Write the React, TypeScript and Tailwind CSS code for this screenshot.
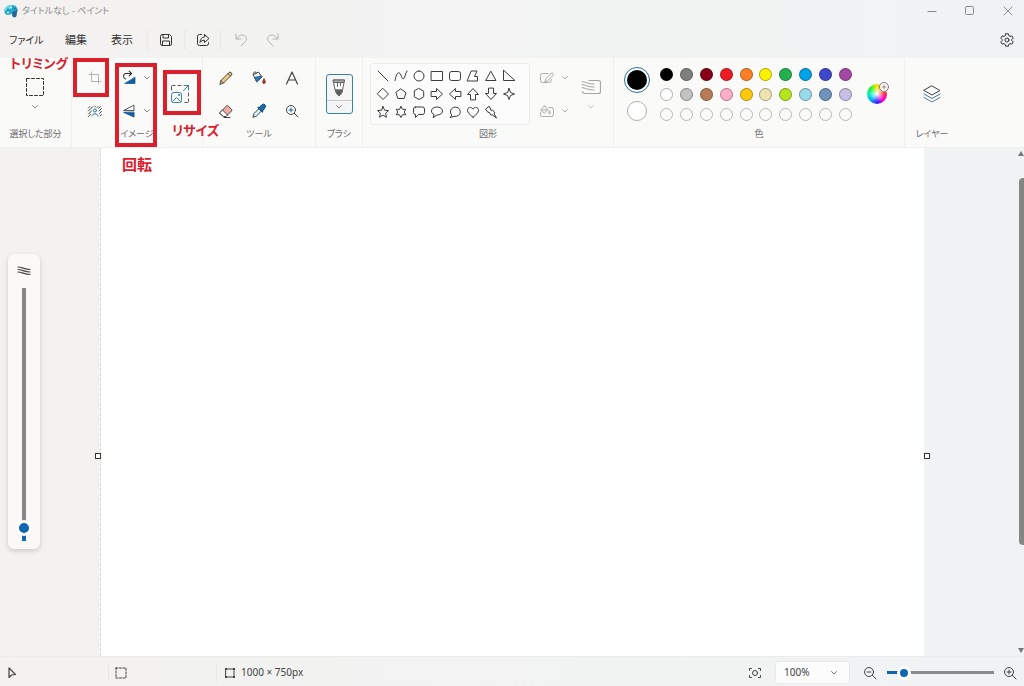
import { useState, type ReactNode } from "react";
import clsx from "clsx";

interface IconProps {
  children: ReactNode;
  box?: number;
  className?: string;
}

function Icon({ children, box = 16, className = "w-4 h-4" }: IconProps) {
  return (
    <svg
      viewBox={`0 0 ${box} ${box}`}
      fill="none"
      stroke="currentColor"
      strokeLinecap="round"
      strokeLinejoin="round"
      className={clsx("shrink-0", className)}
      aria-hidden="true"
    >
      {children}
    </svg>
  );
}

function Chevron({ className = "text-[#8a8a8a]" }: { className?: string }) {
  return (
    <Icon box={8} className={clsx("w-2 h-2", className)}>
      <path d="M1.5 2.5 4 5 6.5 2.5" />
    </Icon>
  );
}

function IconButton({ label, children, className }: { label: string; children: ReactNode; className?: string }) {
  return (
    <button type="button" aria-label={label} className={clsx("flex items-center justify-center", className)}>
      {children}
    </button>
  );
}

function Group({ title, className, children }: { title: string; className?: string; children: ReactNode }) {
  return (
    <section aria-label={title} className={clsx("flex flex-col shrink-0 border-r border-[#f0f0ef] pt-[3px]", className)}>
      <div className="flex flex-1 items-center">{children}</div>
      <div className="mb-1.5 text-center text-[9px] leading-[14px] text-[#6a6a6a] whitespace-nowrap">{title}</div>
    </section>
  );
}

const shapes: { name: string; d: string }[] = [
  { name: "直線", d: "M2 2 12 12" },
  { name: "曲線", d: "M1 11.5C2 6 4 2 6 4.5S8 12 10 9 11.5 3.5 13 2" },
  { name: "楕円", d: "M7 2a5 5 0 1 0 0 10A5 5 0 1 0 7 2Z" },
  { name: "四角形", d: "M1.5 2.5h11v9h-11Z" },
  { name: "角丸四角形", d: "M3.5 2.5h7a2 2 0 0 1 2 2v5a2 2 0 0 1-2 2h-7a2 2 0 0 1-2-2v-5a2 2 0 0 1 2-2Z" },
  { name: "多角形", d: "M5.5 2H11L8.5 7.5h3V12H1.5Z" },
  { name: "三角形", d: "M7 2.5 12 11.5H2Z" },
  { name: "直角三角形", d: "M1.5 1.5v10h11Z" },
  { name: "ひし形", d: "M7 1.5 12.5 7 7 12.5 1.5 7Z" },
  { name: "五角形", d: "M7 2 12 5.7 10.2 11.5H3.8L2 5.7Z" },
  { name: "六角形", d: "M7 1.5 11.7 4.2v5.6L7 12.5 2.3 9.8V4.2Z" },
  { name: "右矢印", d: "M1.5 4.5h5v-3L12.5 7l-6 5.5v-3h-5Z" },
  { name: "左矢印", d: "M12.5 4.5h-5v-3L1.5 7l6 5.5v-3h5Z" },
  { name: "上矢印", d: "M4.5 12.5v-5h-3L7 1.5l5.5 6h-3v5Z" },
  { name: "下矢印", d: "M4.5 1.5v5h-3L7 12.5l5.5-6h-3v-5Z" },
  { name: "四角星", d: "M7 1.5 8.5 5.5 12.5 7 8.5 8.5 7 12.5 5.5 8.5 1.5 7 5.5 5.5Z" },
  { name: "五角星", d: "M7 1.5 8.6 5.2 12.5 5.6 9.6 8.2 10.5 12.2 7 10.1 3.5 12.2 4.4 8.2 1.5 5.6 5.4 5.2Z" },
  { name: "六角星", d: "M7 1.5 8.6 4.3H11.8L10.2 7 11.8 9.7H8.6L7 12.5 5.4 9.7H2.2L3.8 7 2.2 4.3H5.4Z" },
  { name: "角丸吹き出し", d: "M3.5 2h7a2 2 0 0 1 2 2v3.5a2 2 0 0 1-2 2H6.5L3.5 12.5V9.5a2 2 0 0 1-2-2V4a2 2 0 0 1 2-2Z" },
  { name: "楕円吹き出し", d: "M3.8 9.5C2.3 8.7 1.5 7.5 1.5 6 1.5 3.5 4 2 7 2s5.5 1.5 5.5 4S10 10 7 10L3.5 12.5Z" },
  { name: "雲吹き出し", d: "M3.5 9.8a5 4.7 0 1 1 2.5 1.5L2.5 12.5Z" },
  { name: "ハート", d: "M7 12.2C4 9.8 1.5 7.8 1.5 5.2 1.5 2.3 5.2 1.2 7 4.2 8.8 1.2 12.5 2.3 12.5 5.2 12.5 7.8 10 9.8 7 12.2Z" },
  { name: "稲妻", d: "M5 1.5 1.5 4 4 7.5l1-.5 2 3.2 1-.5 4.5 3.3L10 8.5l1-.6L8.5 5l-1 .4Z" },
];

const palette = [
  "#000000", "#7f7f7f", "#880015", "#ed1c24", "#ff7f27", "#fff200", "#22b14c", "#00a2e8", "#3f48cc", "#a349a4",
  "#ffffff", "#c3c3c3", "#b97a57", "#ffaec9", "#ffc90e", "#efe4b0", "#b5e61d", "#99d9ea", "#7092be", "#c8bfe7",
];

function TitleBar() {
  return (
    <header className="flex h-[22px] shrink-0 items-center pl-[3px] text-[#8a8a8a]">
      <svg viewBox="0 0 16 16" className="h-4 w-4" aria-hidden="true">
        <path d="M1.5 9C1 5 4 2 8.5 2c4 0 6 2.200 6 5.500L13 9v4c-1 1.500-3 1.500-3.500 0l-.5-2.500C5.500 13 2 12 1.500 9Z" fill="#25a9c9" />
        <path d="M9 9.500 14.500 6.500 13.500 13c-1 2-3.500 1.500-4 0Z" fill="#2a6591" />
        <path d="M1.500 8C2 4 5 1.500 9 2L7 6Z" fill="#65dbe0" />
        <circle cx="8" cy="4.500" r="1" fill="#d8f6f8" />
        <circle cx="5" cy="6.500" r="1" fill="#1a7fb5" />
        <circle cx="11.500" cy="5.500" r="1" fill="#1f6fa8" />
        <circle cx="5" cy="9.500" r="1" fill="#bdf5ef" />
      </svg>
      <h1 className="ml-[3px] text-[9px] leading-4">タイトルなし - ペイント</h1>
      <div className="ml-auto flex items-center gap-[22px] pr-2">
        <IconButton label="最小化">
          <Icon><path d="M4 8.500h8" /></Icon>
        </IconButton>
        <IconButton label="最大化">
          <Icon><rect x="3.500" y="3.500" width="8" height="8" rx="1" /></Icon>
        </IconButton>
        <IconButton label="閉じる">
          <Icon><path d="m4 4 8 8m0-8-8 8" /></Icon>
        </IconButton>
      </div>
    </header>
  );
}

function MenuBar() {
  return (
    <nav className="flex h-9 shrink-0 items-center px-[9px] text-[11px] text-[#333]">
      <button type="button" className="w-14 text-left text-[10px] whitespace-nowrap">ファイル</button>
      <button type="button" className="w-[46px] text-left">編集</button>
      <button type="button" className="w-9 text-left">表示</button>
      <div className="flex items-center">
        <IconButton label="保存" className="h-5 w-[37px] border-l border-[#e9e8e7]">
          <Icon>
            <path d="M2.500 4A1.500 1.500 0 0 1 4 2.500h7.500l2 2V12a1.500 1.500 0 0 1-1.500 1.500H4A1.500 1.500 0 0 1 2.500 12Z" />
            <path d="M5 2.500V6h5.500V2.500M4.500 13.500V9h7v4.500" />
          </Icon>
        </IconButton>
        <IconButton label="共有" className="h-5 w-[37px] border-x border-[#e9e8e7]">
          <Icon>
            <path d="M6.500 2.500h-2a2 2 0 0 0-2 2v7a2 2 0 0 0 2 2h7a2 2 0 0 0 2-2V10.500" />
            <path d="M9.500 2.500 14 6.500 9.500 10.500V8.200C7.500 8.200 6 9 5 10.500 5.200 7 7 5 9.500 4.800Z" />
          </Icon>
        </IconButton>
      </div>
      <div className="ml-3 flex gap-4 text-[#b3b3b3]">
        <IconButton label="元に戻す">
          <Icon><path d="M3 2v5h5M3.300 6.800C6 3.500 9 1.800 11.800 3.800c2.300 1.800 1.900 4.300.3 6L8 14" /></Icon>
        </IconButton>
        <IconButton label="やり直し">
          <Icon><path d="M13 2v5H8M12.700 6.800C10 3.500 7 1.800 4.200 3.800c-2.300 1.800-1.900 4.300-.3 6L8 14" /></Icon>
        </IconButton>
      </div>
      <IconButton label="設定" className="ml-auto">
        <Icon>
          <path d="M6.700 1.800h2.600l.5 1.900 1.200.7 1.900-.5 1.300 2.200L12.800 7.500v1l1.400 1.400-1.300 2.200-1.900-.5-1.200.7-.5 1.900H6.700l-.5-1.900-1.200-.7-1.900.5L1.800 9.900l1.400-1.400v-1L1.800 6.100l1.300-2.200 1.900.5 1.200-.7Z" />
          <circle cx="8" cy="8" r="2" />
        </Icon>
      </IconButton>
    </nav>
  );
}

function ImageGroup() {
  return (
    <Group title="イメージ" className="w-[131px]">
      <div className="ml-[15px] flex flex-col gap-[17px]">
        <IconButton label="トリミング">
          <Icon className="h-4 w-4 text-[#b5b5b5]"><path d="M4.500 2v9.500H14M2 4.500h9.500V14" /></Icon>
        </IconButton>
        <IconButton label="背景の削除">
          <Icon className="h-4 w-4 text-[#444]">
            <path d="M1.500 5 3 3.500M1.500 8 6 3.500M1.500 11 4.500 8M1.500 13.500l2-2M8 4l.5-.5M10 4.500l1-1M11.500 5.500l2-2M12 8l2.500-2.500M12.500 10.500l2-2M13 13l1.500-1.500" />
            <circle cx="8" cy="7.500" r="1.500" stroke="#2f6f9d" />
            <path d="M5 13c0-3 6-3 6 0" stroke="#2f6f9d" />
          </Icon>
        </IconButton>
      </div>
      <div className="ml-[18px] flex flex-col gap-[17px]">
        <button type="button" aria-label="回転" className="flex items-center gap-1.5">
          <Icon>
            <path d="M14 7.500V13.500H4Z" fill="#135d9c" stroke="#135d9c" strokeWidth=".8" />
            <path d="M4.500 9A2.900 2.900 0 0 1 4.500 3.500H10.500M8.200 1.200 10.500 3.500 8.200 5.800" stroke="#333" strokeWidth="1.100" />
          </Icon>
          <Chevron />
        </button>
        <button type="button" aria-label="反転" className="flex items-center gap-1.5">
          <Icon>
            <path d="M13 2.500v5H3Z" stroke="#555" />
            <path d="M13 9.500v4.500L3 9.500Z" fill="#135d9c" stroke="#135d9c" />
          </Icon>
          <Chevron />
        </button>
      </div>
      <IconButton label="サイズ変更と傾斜" className="ml-[19px]">
        <Icon box={20} className="h-5 w-5 text-[#3b7cab]">
          <path d="M1.500 6V2.500A1 1 0 0 1 2.500 1.500H5M8 1.500h3M18.500 9v3M18.500 15v2.500a1 1 0 0 1-1 1H15" stroke="#555" />
          <path d="M14 1.500H18.500V6M18.500 1.500l-5 5" />
          <rect x="1.500" y="8.500" width="10" height="10" rx="2" />
          <path d="m2.500 17.500 4-4 4 4" />
          <circle cx="9" cy="11" r=".6" />
        </Icon>
      </IconButton>
    </Group>
  );
}

function ToolsGroup() {
  return (
    <Group title="ツール" className="w-[113px]">
      <div className="mx-auto grid grid-cols-3 gap-[17px] text-[#444]">
        <IconButton label="鉛筆">
          <Icon>
            <path d="M2 14 3 10.500 10.800 2.700a1.700 1.700 0 0 1 2.500 2.500L5.500 13Z" fill="#f3cf7c" />
            <path d="m10 3.500 2.500 2.500M3 10.500 5.500 13" />
          </Icon>
        </IconButton>
        <IconButton label="塗りつぶし">
          <Icon>
            <path d="M2.500 4.500 7.500 2 11 7 6 11.500Z" fill="#e8f3fb" />
            <path d="M4 7.500 10.500 6 11 7 6 11.500Z" fill="#2b7bb9" stroke="#265d86" />
            <path d="M2.500 4.500C1.500 2 4.500 1 5.500 3" />
            <path d="M13 9c2 2.500 1.500 4.500 0 4.500S11 11.500 13 9Z" fill="#a83a2b" stroke="#8b3a31" />
          </Icon>
        </IconButton>
        <IconButton label="テキスト">
          <Icon><path d="M2.500 14 8 2l5.500 12M4.500 10h7" strokeWidth="1.200" /></Icon>
        </IconButton>
        <IconButton label="消しゴム">
          <Icon>
            <path d="M2 9.500 8.500 3a1.200 1.200 0 0 1 1.700 0l3.300 3.300a1.200 1.200 0 0 1 0 1.700L8 13.500H5.500L2 10.500Z" fill="#f2aaa4" />
            <path d="M2 9.500 4.500 7 9.500 12 8 13.500H5.500L2 10.500Z" fill="#fff" />
            <path d="M6 14.500h6" />
          </Icon>
        </IconButton>
        <IconButton label="スポイト">
          <Icon>
            <path d="M2 14 3 10.500 8 5.500 10.500 8l-5 5Z" fill="#d8ecf9" />
            <path d="m7 4.500 1.500-.5L11 1.800a2 2 0 0 1 3 3L12 7.500 11.500 9Z" fill="#1769aa" stroke="#174f7d" />
          </Icon>
        </IconButton>
        <IconButton label="拡大鏡">
          <Icon>
            <circle cx="7" cy="7" r="4.500" />
            <path d="m10.300 10.300 3.700 3.700" />
            <path d="M7 5v4M5 7h4" stroke="#1769aa" />
          </Icon>
        </IconButton>
      </div>
    </Group>
  );
}

function ShapesGroup() {
  return (
    <Group title="図形" className="w-[251px]">
      <div className="ml-[7px] grid grid-cols-8 content-start rounded-[3px] border border-[#ececec] bg-[#fcfcfc] py-[3px] pl-[3px] pr-[11px] text-[#3c3c3c]">
        {shapes.map((s) => (
          <IconButton key={s.name} label={s.name} className="h-[18px] w-[18px]">
            <Icon box={14} className="h-3.5 w-3.5"><path d={s.d} /></Icon>
          </IconButton>
        ))}
      </div>
      <div className="ml-[9px] flex flex-col gap-[17px] text-[#ababab]">
        <button type="button" aria-label="図形のアウトライン" className="flex items-center gap-1.5">
          <Icon>
            <path d="M9 3.500H3.500a2 2 0 0 0-2 2v5a2 2 0 0 0 2 2h6a3 3 0 0 0 3-3" />
            <path d="m6 11.500.8-2.800L12 3.500a1.400 1.400 0 0 1 2 2L8.800 10.700Z" />
          </Icon>
          <Chevron className="text-[#ababab]" />
        </button>
        <button type="button" aria-label="図形の塗りつぶし" className="flex items-center gap-1.5">
          <Icon>
            <path d="M10 4.500h2.500a2 2 0 0 1 2 2v5a2 2 0 0 1-2 2h-9a2 2 0 0 1-2-2V9" />
            <path d="M2 6.500 5.500 3 9 6.500 5.500 10ZM3 7h5.500M5 2.500l1.500 1.500" />
            <path d="M10.500 8c1.500 2 .8 3 0 3s-1.500-1 0-3Z" />
          </Icon>
          <Chevron className="text-[#ababab]" />
        </button>
      </div>
      <button type="button" aria-label="サイズ" className="ml-3 flex flex-col items-center gap-1.5">
        <Icon box={20} className="h-5 w-5 text-[#a5a5a5]">
          <path d="M8 3.500h9.500a2 2 0 0 1 2 2v9a2 2 0 0 1-2 2h-14a2 2 0 0 1-2-2" strokeWidth="1.200" />
          <path d="M1 4.500c4 .5 7 3 12 2.500M1 7.500c4 .5 7 3 12 2.500M1 10.500c4 .5 7 3 12 2.500" />
        </Icon>
        <Chevron className="text-[#c6c6c6]" />
      </button>
    </Group>
  );
}

function ColorsGroup() {
  const [color, setColor] = useState("#000000");

  return (
    <Group title="色" className="w-[291px]">
      <div className="ml-2.5 flex w-[26px] flex-col items-center gap-2">
        <button
          type="button"
          aria-label="色 1"
          className="flex h-[26px] w-[26px] items-center justify-center rounded-full border border-[#27709f] bg-white"
        >
          <span className="h-5 w-5 rounded-full" style={{ backgroundColor: color }} />
        </button>
        <button type="button" aria-label="色 2" className="h-5 w-5 rounded-full border border-[#b0b0b0] bg-white" />
      </div>
      <div className="ml-[7px] grid w-[198px] grid-cols-10 justify-items-center gap-y-[7px]">
        {palette.map((c) => (
          <button
            key={c}
            type="button"
            aria-label={c}
            onClick={() => setColor(c)}
            className="h-[13px] w-[13px] rounded-full border border-black/30"
            style={{ backgroundColor: c }}
          />
        ))}
        {Array.from({ length: 10 }, (_, i) => (
          <button
            key={i}
            type="button"
            aria-label={`カスタム色 ${i + 1}`}
            className="h-[13px] w-[13px] rounded-full border border-[#b8b8b8]"
          />
        ))}
      </div>
      <button
        type="button"
        aria-label="色の編集"
        className="relative ml-3 h-5 w-5 rounded-full bg-[radial-gradient(circle,white,transparent_55%),conic-gradient(#ffe600,#ff9000,#ff2050,#ff00e0,#3020ff,#00b0ff,#00f0c0,#30f020,#ffe600)]"
      >
        <span className="absolute -right-0.5 -top-0.5 flex rounded-full bg-white">
          <Icon box={10} className="h-2.5 w-2.5 text-[#777]">
            <circle cx="5" cy="5" r="4.500" />
            <path d="M5 3v4M3 5h4" stroke="#b08080" />
          </Icon>
        </span>
      </button>
    </Group>
  );
}

function Ribbon() {
  return (
    <div className="flex h-[90px] shrink-0 border-b border-[#efefee] bg-[#fafaf9]">
      <Group title="選択した部分" className="w-[72px]">
        <button type="button" aria-label="選択" className="mx-auto flex flex-col items-center gap-1.5 pr-0.5 text-[#333]">
          <Icon box={20} className="h-5 w-5">
            <rect x="1.500" y="1.500" width="17" height="17" strokeDasharray="3 2" />
          </Icon>
          <Chevron />
        </button>
      </Group>
      <ImageGroup />
      <ToolsGroup />
      <Group title="ブラシ" className="w-[47px]">
        <button
          type="button"
          aria-label="ブラシ"
          className="mx-auto flex h-10 w-[27px] flex-col items-center rounded-[3px] border border-[#3a80ad] bg-[#f5f5f5]"
        >
          <span className="flex h-[26px] w-full items-center justify-center border-b border-[#c9c9c9]">
            <Icon box={18} className="h-[18px] w-[18px] text-[#666]">
              <path d="M3.500 1h11L12.500 11h-7Z" fill="#fff" />
              <path d="M3.500 1h11l-.5 2.500H4Z" fill="#aaa" />
              <path d="M7.500 3.500v4M10.500 3.500v3" />
              <path d="M5.500 11h7c0 3-1.500 4.500-3.500 6-2-1.500-3.500-3-3.500-6Z" fill="#5f5f5f" />
            </Icon>
          </span>
          <span className="flex flex-1 items-center"><Chevron /></span>
        </button>
      </Group>
      <ShapesGroup />
      <ColorsGroup />
      <Group title="レイヤー" className="w-[54px] border-r-0">
        <IconButton label="レイヤー" className="mx-auto">
          <Icon box={18} className="h-[18px] w-[18px] text-[#444]">
            <path d="M9 1 17 5.500 9 10 1 5.500Z" />
            <path d="m1 9 8 4.500L17 9" stroke="#3f7299" />
            <path d="m1 12.500 8 4.500 8-4.500" stroke="#5f7f95" />
          </Icon>
        </IconButton>
      </Group>
    </div>
  );
}

function Workspace() {
  return (
    <main className="flex min-h-0 flex-1">
      <aside className="w-[101px] shrink-0 border-r border-dashed border-[#dcdcdc] pl-2 pt-[106px]">
        <div className="flex w-8 flex-col items-center rounded-md bg-[#fbf9f8] pb-2 pt-[9px] shadow-[0_2px_5px_rgba(0,0,0,0.16)]">
          <Icon className="h-4 w-4 text-[#444]">
            <path d="M2 4c4 .3 7 2.300 12 2.500M2 6.500c4 .3 7 2.300 12 2.500M2 9c4 .3 7 2.300 12 2.500" strokeWidth="1.200" />
          </Icon>
          <input
            type="range"
            aria-label="ブラシのサイズ"
            defaultValue={2}
            className="mt-[9px] h-[253px] w-4 appearance-none bg-[linear-gradient(to_top,#0f67b4_5%,#8b8787_5%)] bg-[length:4px_100%] bg-center bg-no-repeat [direction:rtl] [writing-mode:vertical-lr] [&::-webkit-slider-thumb]:h-4 [&::-webkit-slider-thumb]:w-4 [&::-webkit-slider-thumb]:appearance-none [&::-webkit-slider-thumb]:rounded-full [&::-webkit-slider-thumb]:border-[3px] [&::-webkit-slider-thumb]:border-solid [&::-webkit-slider-thumb]:border-white [&::-webkit-slider-thumb]:bg-[#0f67b4]"
          />
        </div>
      </aside>
      <div className="relative flex-1 bg-white">
        <span className="absolute -left-1.5 top-[305px] h-1.5 w-1.5 border border-[#333] bg-white" />
        <span className="absolute -right-1.5 top-[305px] h-1.5 w-1.5 border border-[#333] bg-white" />
      </div>
      <div className="flex w-[100px] shrink-0 justify-end">
        <div className="flex w-1.5 flex-col items-center pb-[3px] pt-[3px] text-[#777]">
          <svg viewBox="0 0 6 5" className="h-[5px] w-1.5 fill-current" aria-hidden="true"><path d="M0 5 3 0 6 5Z" /></svg>
          <div className="mt-[22px] h-[367px] w-[5px] rounded-l-sm bg-[#858585]" />
          <svg viewBox="0 0 6 5" className="mt-auto h-[5px] w-1.5 fill-current" aria-hidden="true"><path d="M0 0h6L3 5Z" /></svg>
        </div>
      </div>
    </main>
  );
}

function StatusBar() {
  return (
    <footer className="flex h-[30px] shrink-0 items-center border-t border-[#ededeb] pt-0.5 pl-1 pr-1.5 text-[10px] text-[#444]">
      <div className="flex h-4 w-[105px] items-center border-r border-[#e6e5e2]">
        <Icon><path d="M5 3v9.500l2.500-2.500 4-.5Z" strokeWidth="1.200" /></Icon>
      </div>
      <div className="flex h-4 w-[108px] items-center border-r border-[#e6e5e2] pl-1">
        <Icon><rect x="3" y="3" width="10" height="10" strokeDasharray="2 1.500" /></Icon>
      </div>
      <div className="flex items-center gap-[3px] pl-[5px]">
        <Icon>
          <rect x="4" y="4" width="8" height="8" />
          <path d="M3 3h2v2H3ZM11 3h2v2h-2ZM3 11h2v2H3ZM11 11h2v2h-2Z" fill="currentColor" stroke="none" />
        </Icon>
        <span className="whitespace-nowrap">1000 × 750px</span>
      </div>
      <div className="ml-auto flex items-center">
        <IconButton label="画面に合わせる">
          <Icon>
            <path d="M2.500 5.500v-2h2M11.500 3.500h2v2M13.500 10.500v2h-2M4.500 12.500h-2v-2" />
            <circle cx="8" cy="8" r="2.500" />
          </Icon>
        </IconButton>
        <div className="relative ml-3 h-[23px] w-[75px]">
          <select
            aria-label="ズーム"
            className="h-full w-full appearance-none rounded-[3px] border border-[#e9e9e9] bg-[#fcfcfc] pl-2"
          >
            <option>100%</option>
            <option>200%</option>
          </select>
          <span className="pointer-events-none absolute right-3 top-2"><Chevron className="text-[#777]" /></span>
        </div>
        <IconButton label="縮小" className="ml-3">
          <Icon><circle cx="7" cy="7" r="4.500" /><path d="m10.300 10.300 3.700 3.700M5 7h4" /></Icon>
        </IconButton>
        <input
          type="range"
          aria-label="ズームの倍率"
          defaultValue={11}
          className="ml-[9px] h-3.5 w-[107px] appearance-none bg-[linear-gradient(to_right,#1566a8_14%,#8b8b8b_14%)] bg-[length:100%_3px] bg-center bg-no-repeat [&::-webkit-slider-thumb]:h-3.5 [&::-webkit-slider-thumb]:w-3.5 [&::-webkit-slider-thumb]:appearance-none [&::-webkit-slider-thumb]:rounded-full [&::-webkit-slider-thumb]:border-[3px] [&::-webkit-slider-thumb]:border-solid [&::-webkit-slider-thumb]:border-white [&::-webkit-slider-thumb]:bg-[#0f67b4]"
        />
        <IconButton label="拡大" className="ml-2">
          <Icon><circle cx="7" cy="7" r="4.500" /><path d="m10.300 10.300 3.700 3.700M5 7h4M7 5v4" /></Icon>
        </IconButton>
      </div>
    </footer>
  );
}

// Red callouts that lie over the ribbon
function Callouts() {
  return (
    <div className="pointer-events-none absolute inset-0 text-[13px] font-bold leading-4 whitespace-nowrap text-[#d9202c]">
      <div className="absolute left-[73px] top-[58px] h-[39px] w-9 border-4 border-[#d9202c]" />
      <div className="absolute left-[115px] top-[63px] h-[84px] w-[42px] border-4 border-[#d9202c]" />
      <div className="absolute left-[163px] top-[70px] h-[45px] w-[38px] border-4 border-[#d9202c]" />
      <span className="absolute left-[10px] top-[55px]">トリミング</span>
      <span className="absolute left-[172px] top-[122px]">リサイズ</span>
      <span className="absolute left-[122px] top-[156px] text-[15px]">回転</span>
    </div>
  );
}

export default function App() {
  return (
    <div className="relative flex h-screen flex-col overflow-hidden bg-linear-to-r from-[#f3f2f0] to-[#f0f3f4] font-['Noto_Sans','Noto_Sans_CJK_JP',sans-serif] [font-feature-settings:'palt']">
      <TitleBar />
      <MenuBar />
      <Ribbon />
      <Workspace />
      <StatusBar />
      <Callouts />
    </div>
  );
}
